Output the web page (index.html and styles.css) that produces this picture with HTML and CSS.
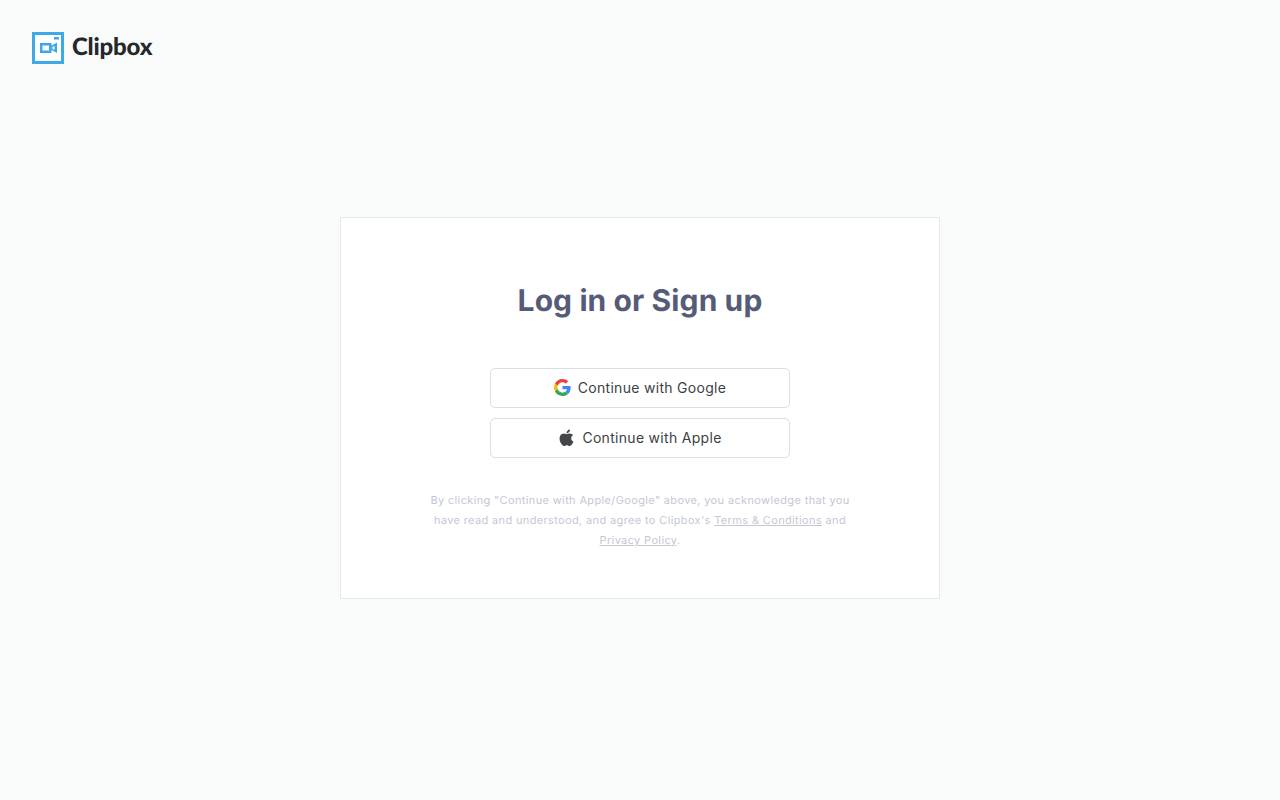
FILE: index.html
```html
<!DOCTYPE html>
<html lang="en">
    <head>
        <meta charset="UTF-8" />
        <meta name="viewport" content="width=device-width, initial-scale=1.0" />
        <title>Clipbox - Log in or Sign up</title>
        <link rel="stylesheet" href="styles.css">
    </head>
    <body>
        <header class="top-bar">
            <a class="logo" href="#">
                <svg class="logo-mark" width="32" height="32" viewBox="0 0 32 32" aria-hidden="true">
                    <rect x="1.500" y="1.500" width="29" height="29" fill="#fff" stroke="#3fa9e8" stroke-width="3"/>
                    <rect x="22" y="5" width="5" height="2.500" fill="#3fa9e8"/>
                    <path fill="#3fa9e8" fill-rule="evenodd" d="M8 11h11.500v2.500L25 10.500v10.500l-5.500-3v3H8zM10.500 13.500v5h6.500v-5zM20.300 15v1.800l2.200 1v-3.800z"/>
                </svg>
                <span class="logo-text">Clipbox</span>
            </a>
        </header>

        <main class="login-wrap">
            <section class="login-card">
                <h1>Log in or Sign up</h1>
                <div class="btn-list">
                    <button type="button" class="social-btn">
                        <svg width="17" height="17" viewBox="0 0 48 48" aria-hidden="true">
                            <path fill="#EA4335" d="M24 9.500c3.540 0 6.710 1.220 9.210 3.600l6.850-6.850C35.900 2.380 30.470 0 24 0 14.620 0 6.510 5.380 2.560 13.220l7.980 6.190C12.430 13.720 17.740 9.500 24 9.500z"/>
                            <path fill="#4285F4" d="M46.980 24.550c0-1.570-.15-3.090-.38-4.550H24v9.020h12.940c-.58 2.960-2.260 5.480-4.780 7.180l7.730 6c4.510-4.180 7.090-10.360 7.090-17.650z"/>
                            <path fill="#FBBC05" d="M10.530 28.590c-.48-1.450-.76-2.990-.76-4.590s.27-3.140.76-4.590l-7.980-6.190C.92 16.460 0 20.120 0 24c0 3.880.92 7.540 2.560 10.780l7.970-6.190z"/>
                            <path fill="#34A853" d="M24 48c6.480 0 11.930-2.130 15.890-5.810l-7.730-6c-2.150 1.450-4.920 2.300-8.160 2.300-6.260 0-11.570-4.220-13.470-9.910l-7.980 6.190C6.510 42.620 14.620 48 24 48z"/>
                        </svg>
                        <span>Continue with Google</span>
                    </button>
                    <button type="button" class="social-btn">
                        <svg width="17" height="17" viewBox="3.500 2.500 17 18.500" aria-hidden="true">
                            <path fill="#44474a" d="M17.050 20.280c-.98.950-2.050.8-3.080.35-1.090-.46-2.090-.48-3.240 0-1.440.62-2.200.44-3.060-.35C2.790 15.250 3.510 7.590 9.050 7.310c1.350.07 2.290.74 3.080.8 1.180-.24 2.310-.93 3.570-.84 1.510.12 2.650.72 3.400 1.800-3.120 1.870-2.380 5.980.48 7.130-.57 1.500-1.310 2.990-2.540 4.090zM12.030 7.250c-.15-2.230 1.660-4.070 3.740-4.250.29 2.580-2.340 4.500-3.740 4.250z"/>
                        </svg>
                        <span>Continue with Apple</span>
                    </button>
                </div>
                <p class="legal">
                    By clicking "Continue with Apple/Google" above, you acknowledge that you
                    have read and understood, and agree to Clipbox's <a href="#">Terms &amp; Conditions</a> and
                    <a href="#">Privacy Policy</a>.
                </p>
            </section>
        </main>
    </body>
</html>
```

FILE: styles.css
```css
:root {
  --bg: #f9fbfa;
  --surface: #ffffff;
  --card-border: #e4e9f2;
  --btn-border: #dcdfe3;
  --title: #565b78;
  --text-dark: #3c3f44;
  --text-light: #c5c7d5;
  --font: 'Inter', 'Liberation Sans', sans-serif;
}

* {
  box-sizing: border-box;
  margin: 0;
  padding: 0;
}

body {
  font-family: var(--font);
  background-color: var(--bg);
  min-height: 100vh;
  text-rendering: geometricPrecision;
}

.top-bar {
  padding: 32px 32px 0;
}

.logo {
  display: flex;
  align-items: center;
  gap: 8px;
  height: 32px;
  text-decoration: none;
}

.logo-mark {
  flex-shrink: 0;
}

.logo-text {
  margin-bottom: 3px;
  font-family: 'Lato', sans-serif;
  font-weight: 900;
  font-size: 24px;
  letter-spacing: -0.2px;
  color: #25282a;
}

.login-wrap {
  display: flex;
  justify-content: center;
  padding-top: 153px;
}

.login-card {
  width: 600px;
  height: 382px;
  background: var(--surface);
  border: 1px solid var(--card-border);
  padding-top: 65px;
  text-align: center;
}

h1 {
  font-family: 'Inter', sans-serif;
  font-size: 30px;
  line-height: 36px;
  font-weight: 700;
  letter-spacing: 0.1px;
  color: var(--title);
}

.btn-list {
  display: flex;
  flex-direction: column;
  gap: 10px;
  width: 300px;
  margin: 49px auto 0;
}

.social-btn {
  display: flex;
  align-items: center;
  justify-content: center;
  gap: 7px;
  height: 40px;
  background: var(--surface);
  border: 1px solid var(--btn-border);
  border-radius: 5px;
  font-family: var(--font);
  font-size: 14px;
  letter-spacing: 0.3px;
  color: var(--text-dark);
  cursor: pointer;
}

.social-btn span {
  margin-bottom: 2px;
}

.social-btn svg {
  margin-bottom: 1px;
}

.legal {
  width: 440px;
  margin: 32px auto 0;
  font-size: 11px;
  line-height: 20px;
  letter-spacing: 0.36px;
  color: var(--text-light);
}

.legal a {
  color: inherit;
}
```
